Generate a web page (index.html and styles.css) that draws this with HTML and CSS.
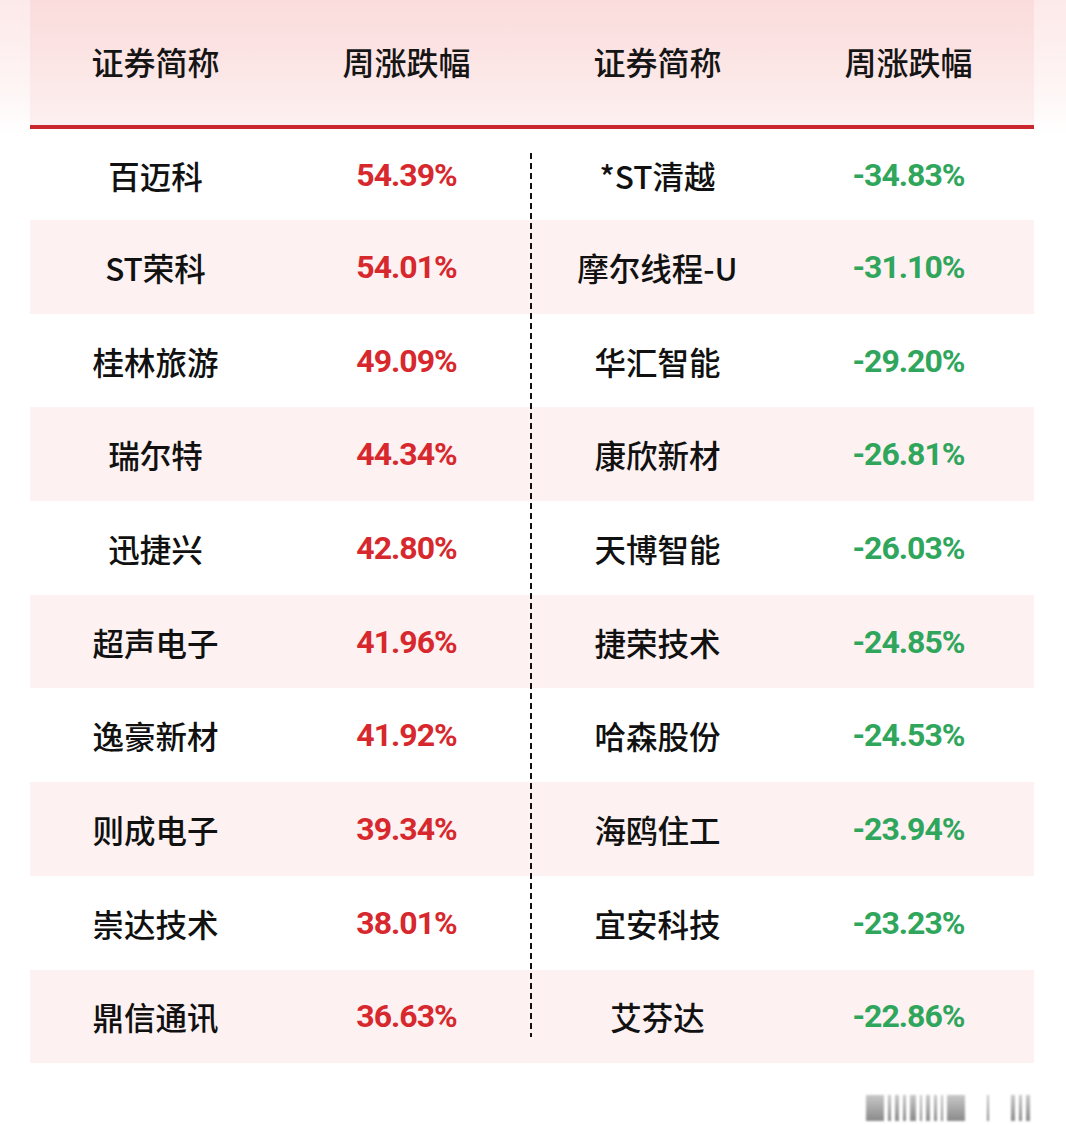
FILE: index.html
```html
<!DOCTYPE html>
<html lang="zh-CN">
<head>
<meta charset="utf-8">
<title>周涨跌幅</title>
<link rel="stylesheet" href="styles.css">
</head>
<body>
<div class="page">
  <div class="board">
    <div class="head">
      <div class="cell">证券简称</div>
      <div class="cell">周涨跌幅</div>
      <div class="cell">证券简称</div>
      <div class="cell">周涨跌幅</div>
    </div>
    <div class="body">
      <div class="divider"></div>
      <div class="row first"><div class="cell name">百迈科</div><div class="cell up">54.39%</div><div class="cell name">*ST清越</div><div class="cell down">-34.83%</div></div>
      <div class="row alt"><div class="cell name">ST荣科</div><div class="cell up">54.01%</div><div class="cell name">摩尔线程-U</div><div class="cell down">-31.10%</div></div>
      <div class="row"><div class="cell name">桂林旅游</div><div class="cell up">49.09%</div><div class="cell name">华汇智能</div><div class="cell down">-29.20%</div></div>
      <div class="row alt"><div class="cell name">瑞尔特</div><div class="cell up">44.34%</div><div class="cell name">康欣新材</div><div class="cell down">-26.81%</div></div>
      <div class="row"><div class="cell name">迅捷兴</div><div class="cell up">42.80%</div><div class="cell name">天博智能</div><div class="cell down">-26.03%</div></div>
      <div class="row alt"><div class="cell name">超声电子</div><div class="cell up">41.96%</div><div class="cell name">捷荣技术</div><div class="cell down">-24.85%</div></div>
      <div class="row"><div class="cell name">逸豪新材</div><div class="cell up">41.92%</div><div class="cell name">哈森股份</div><div class="cell down">-24.53%</div></div>
      <div class="row alt"><div class="cell name">则成电子</div><div class="cell up">39.34%</div><div class="cell name">海鸥住工</div><div class="cell down">-23.94%</div></div>
      <div class="row"><div class="cell name">崇达技术</div><div class="cell up">38.01%</div><div class="cell name">宜安科技</div><div class="cell down">-23.23%</div></div>
      <div class="row alt"><div class="cell name">鼎信通讯</div><div class="cell up">36.63%</div><div class="cell name">艾芬达</div><div class="cell down">-22.86%</div></div>
    </div>
  </div>
  <div class="footer">
    <div class="mark">
      <span class="b w12"></span><span class="b w3"></span><span class="b w4"></span><span class="b w3"></span><span class="b w5"></span><span class="b w2"></span><span class="b w4"></span><span class="b w3"></span><span class="b w2"></span><span class="b w12"></span><span class="sp"></span><span class="b w2"></span><span class="sp"></span><span class="b w4"></span><span class="b w3"></span><span class="b w4"></span>
    </div>
  </div>
</div>
</body>
</html>
```

FILE: styles.css
```css
* { box-sizing: border-box; }
html, body { margin: 0; padding: 0; }
body {
  background: #fff;
  font-family: "Noto Sans CJK SC", "Noto Sans", sans-serif;
  color: #111;
}
.page {
  width: 1066px;
  height: 1125px;
  background: linear-gradient(to bottom, #fde9e9 0, #fef5f5 90px, #ffffff 135px);
  padding: 0 32px 0 30px;
}
.board { width: 1004px; }
.head {
  display: grid;
  grid-template-columns: repeat(4, 1fr);
  height: 129px;
  background: linear-gradient(to bottom, #fbdcdc 0%, #fce6e6 55%, #fdf0f0 100%);
  border-bottom: 4px solid #c9272d;
  align-items: center;
}
.head .cell {
  text-align: center;
  font-size: 32px;
  font-weight: 500;
  color: #151515;
  padding-bottom: 4px;
}
.body { position: relative; background: #fff; }
.row {
  display: grid;
  grid-template-columns: repeat(4, 1fr);
  height: 93.7px;
  align-items: center;
}
.row.first { height: 91px; }
.row.alt { background: #fdf1f1; }
.cell { text-align: center; }
.name {
  font-size: 31.5px;
  font-weight: 500;
  color: #111;
}
.up, .down {
  font-family: Roboto, "Liberation Sans", sans-serif;
  font-weight: 700;
  font-size: 32px;
  letter-spacing: -1px;
}
.up { color: #d7282e; }
.down { color: #2fa65c; }
.divider {
  position: absolute;
  left: 500px;
  top: 24px;
  width: 2px;
  height: 884px;
  background: repeating-linear-gradient(to bottom, #111 0, #111 6px, transparent 6px, transparent 10px);
  z-index: 2;
}
.footer {
  display: flex;
  justify-content: flex-end;
  padding-top: 32px;
  padding-right: 4px;
}
.mark {
  display: flex;
  gap: 4px;
  height: 26px;
  align-items: stretch;
  filter: blur(1.2px);
}
.mark .b {
  display: block;
  background: linear-gradient(to bottom, #c8c8c8, #8a8a8a);
}
.mark .sp { width: 14px; }
.w2 { width: 2px; }
.w3 { width: 3px; }
.w4 { width: 4px; }
.w5 { width: 6px; }
.w12 { width: 18px; }
```
